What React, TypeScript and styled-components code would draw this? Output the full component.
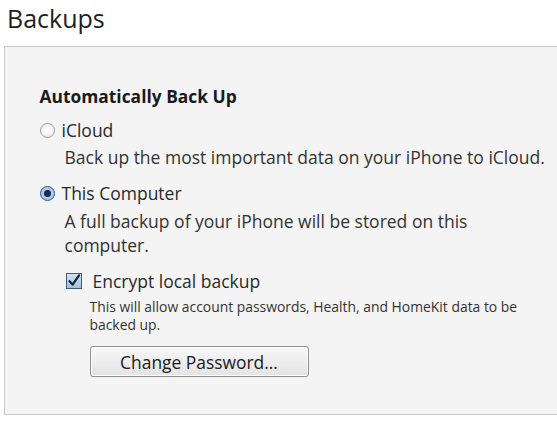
import React from "react";
import styled, { createGlobalStyle } from "styled-components";

const Global = createGlobalStyle`
  html, body { margin: 0; padding: 0; background: #ffffff; }
  body { font-family: "Open Sans", "Noto Sans", sans-serif; color: #333; overflow: hidden; }
`;

const Page = styled.div`
  width: 557px;
  height: 425px;
  display: flex;
  flex-direction: column;
`;

const Title = styled.h1`
  margin: 0;
  padding: 2px 0 0 7px;
  font-size: 25px;
  font-weight: 400;
  line-height: 32px;
  color: #1e1e1e;
  height: 46px;
  box-sizing: border-box;
`;

const Panel = styled.section`
  margin: 0 0 0 4px;
  width: 560px;
  height: 369px;
  box-sizing: border-box;
  background: #f4f4f4;
  border: 1.5px solid #c9c9c9;
  border-right: none;
  padding: 37px 0 0 34.5px;
  display: flex;
  flex-direction: column;
`;

const Heading = styled.h2`
  margin: 0 0 10px;
  font-size: 17.4px;
  font-weight: 700;
  line-height: 24px;
  color: #1a1a1a;
`;

const Option = styled.label`
  display: flex;
  align-items: center;
  gap: 7px;
  font-size: 17.5px;
  line-height: 24px;
  color: #2a2a2a;
`;

const RadioDot = styled.span<{ $on?: boolean }>`
  display: block;
  width: 15px;
  min-width: 15px;
  height: 15px;
  border-radius: 50%;
  box-sizing: border-box;
  border: 1.5px solid ${(p) => (p.$on ? "#2c5a88" : "#9a9a9a")};
  background: ${(p) =>
    p.$on
      ? "radial-gradient(circle, #12305a 0 3.3px, #b7d0ea 4px, #8fb3dc 100%)"
      : "radial-gradient(circle at 50% 35%, #ffffff 0, #f3f3f3 60%, #dcdcdc 100%)"};
  flex: none;
`;

const Desc = styled.p<{ $mt: number; $mb: number }>`
  margin: ${(p) => p.$mt}px 0 ${(p) => p.$mb}px 25px;
  font-size: 17.5px;
  line-height: 24px;
  color: #333;
  max-width: 486px;
`;

const Sub = styled.div`
  margin-left: 26px;
  display: flex;
  flex-direction: column;
`;

const CheckRow = styled.label`
  display: flex;
  align-items: center;
  gap: 11px;
  font-size: 17.5px;
  line-height: 24px;
  color: #2a2a2a;
`;

const CheckBox = styled.span`
  width: 16px;
  height: 16px;
  box-sizing: border-box;
  border: 1px solid #3f5d7f;
  background: linear-gradient(#d3e1ef, #a8bfd8);
  display: flex;
  align-items: center;
  justify-content: center;
  flex: none;
`;

const Small = styled.p`
  margin: 5px 0 0 24px;
  font-size: 13.9px;
  line-height: 18px;
  color: #333;
  max-width: 445px;
`;

const Button = styled.button`
  margin: 12px 0 0 24px;
  width: 219px;
  height: 31px;
  box-sizing: border-box;
  border: 1px solid #8f8f8f;
  border-radius: 3px;
  background: linear-gradient(#f8f8f8, #e3e3e3);
  font-family: "Open Sans", "Noto Sans", sans-serif;
  font-size: 17.4px;
  color: #1a1a1a;
  padding: 0;
  box-shadow: inset 0 0 0 1px #fdfdfd;
`;

export default function App() {
  return (
    <Page>
      <Global />
      <Title>Backups</Title>
      <Panel>
        <Heading>Automatically Back Up</Heading>
        <Option>
          <RadioDot />
          iCloud
        </Option>
        <Desc $mt={3} $mb={12}>
          Back up the most important data on your iPhone to iCloud.
        </Desc>
        <Option>
          <RadioDot $on />
          This Computer
        </Option>
        <Desc $mt={4} $mb={12}>
          A full backup of your iPhone will be stored on this computer.
        </Desc>
        <Sub>
          <CheckRow>
            <CheckBox>
              <svg width="14" height="14" viewBox="0 0 14 14">
                <path d="M2.5 7.2 L5.6 10.6 L12 1.5" fill="none" stroke="#0f2744" strokeWidth="2.2" strokeLinecap="round" strokeLinejoin="round" />
              </svg>
            </CheckBox>
            Encrypt local backup
          </CheckRow>
          <Small>This will allow account passwords, Health, and HomeKit data to be backed up.</Small>
          <Button>Change Password...</Button>
        </Sub>
      </Panel>
    </Page>
  );
}
